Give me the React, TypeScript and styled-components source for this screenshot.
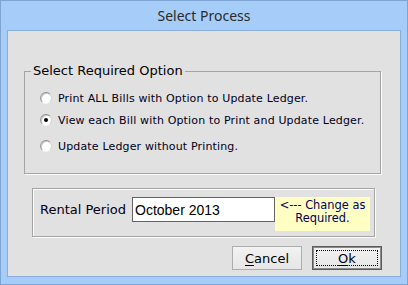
import React from 'react';
import styled, { createGlobalStyle } from 'styled-components';

const GlobalStyle = createGlobalStyle`
  html, body {
    margin: 0;
    padding: 0;
    background: #a5cdf7;
  }

  body {
    font-family: "DejaVu Sans", Verdana, sans-serif;
  }
`;

const Window = styled.div`
  display: flex;
  flex-direction: column;
  box-sizing: border-box;
  width: 408px;
  height: 285px;
  border: 1px solid #7ea4d4;
  background: #a5cdf7;
`;

const TitleBar = styled.div`
  display: flex;
  align-items: center;
  justify-content: center;
  height: 29px;
  color: #2b2b2b;
  font-family: "Noto Sans", "Open Sans", sans-serif;
  font-size: 14px;
`;

const Client = styled.div`
  display: flex;
  flex: 1;
  flex-direction: column;
  box-sizing: border-box;
  margin: 0 6px 7px;
  border: 1px solid #8aaedb;
  background: #e1e1e1;
`;

const OptionGroup = styled.fieldset`
  margin: 32px 19px 0 16px;
  padding: 8px 0 16px;
  border: 1px solid #a4a4a4;
  box-shadow: 1px 1px 0 #fbfbfb;
`;

const GroupTitle = styled.legend`
  margin-left: 6px;
  padding: 0 2px;
  color: #000;
  font-size: 13px;
  line-height: 16px;
`;

const OptionRow = styled.label<{ $spaced?: boolean }>`
  display: flex;
  align-items: center;
  height: 22px;
  margin-top: ${({ $spaced }) => ($spaced ? '4px' : '0')};
  padding-left: 15px;
  color: #000018;
  font-size: 11px;
  letter-spacing: 0.15px;
`;

const RadioMark = styled.span<{ $checked?: boolean }>`
  position: relative;
  box-sizing: border-box;
  width: 12px;
  height: 12px;
  margin-right: 6px;
  border: 1px solid;
  border-color: #8c8c8c #d4d4d4 #f4f4f4 #9a9a9a;
  border-radius: 50%;
  background: #fff;
  box-shadow: inset 1px 1px 0 #c8c8c8;

  &::after {
    content: '';
    display: ${({ $checked }) => ($checked ? 'block' : 'none')};
    position: absolute;
    top: 3px;
    left: 3px;
    width: 4px;
    height: 4px;
    border-radius: 50%;
    background: #000;
  }
`;

const PeriodBox = styled.div`
  display: flex;
  align-items: flex-start;
  margin: 14px 25px 0 24px;
  padding: 8px 0 5px 7px;
  border: 1px solid #a4a4a4;
  box-shadow: 1px 1px 0 #fbfbfb, inset 1px 1px 0 #fbfbfb;
`;

const FieldLabel = styled.span`
  width: 92px;
  line-height: 25px;
  color: #000018;
  font-size: 13px;
  white-space: nowrap;
`;

const PeriodInput = styled.input`
  box-sizing: border-box;
  width: 143px;
  height: 25px;
  padding: 0 2px;
  border: 1px solid #646464;
  background: #fff;
  color: #000;
  font-family: "Liberation Sans", Arial, sans-serif;
  font-size: 14px;
  outline: none;
`;

const Note = styled.div`
  box-sizing: border-box;
  width: 95px;
  height: 34px;
  padding-top: 2px;
  background: #ffffc4;
  color: #00005a;
  font-size: 11.4px;
  line-height: 13px;
  text-align: center;
  white-space: nowrap;
`;

const ButtonRow = styled.div`
  display: flex;
  justify-content: flex-end;
  gap: 10px;
  margin: 9px 18px 0 0;
`;

const Button = styled.button<{ $default?: boolean }>`
  position: relative;
  box-sizing: border-box;
  width: 70px;
  height: 24px;
  padding: 0;
  border: 1px solid ${({ $default }) => ($default ? '#5a5a5a' : '#adadad')};
  background: linear-gradient(#f2f2f2, #e6e6e6);
  box-shadow: ${({ $default }) => ($default ? 'inset 0 0 0 1px #8c8c8c' : 'none')};
  color: #000;
  font-family: "DejaVu Sans", Verdana, sans-serif;
  font-size: 13px;

  &::after {
    content: '';
    display: ${({ $default }) => ($default ? 'block' : 'none')};
    position: absolute;
    inset: 3px;
    border: 1px dotted #000;
  }

  u {
    text-decoration-thickness: 1px;
    text-underline-offset: 2px;
  }
`;

const options = [
  { text: 'Print ALL Bills with Option to Update Ledger.', checked: false, spaced: false },
  { text: 'View each Bill with Option to Print and Update Ledger.', checked: true, spaced: false },
  { text: 'Update Ledger without Printing.', checked: false, spaced: true },
];

const App: React.FC = () => {
  return (
    <>
      <GlobalStyle />
      <Window>
        <TitleBar>Select Process</TitleBar>
        <Client>
          <OptionGroup>
            <GroupTitle>Select Required Option</GroupTitle>
            {options.map((option) => (
              <OptionRow key={option.text} $spaced={option.spaced}>
                <RadioMark $checked={option.checked} />
                {option.text}
              </OptionRow>
            ))}
          </OptionGroup>

          <PeriodBox>
            <FieldLabel>Rental Period</FieldLabel>
            <PeriodInput defaultValue="October 2013" />
            <Note>
              &lt;--- Change as
              <br />
              Required.
            </Note>
          </PeriodBox>

          <ButtonRow>
            <Button>
              <u>C</u>ancel
            </Button>
            <Button $default>
              <u>O</u>k
            </Button>
          </ButtonRow>
        </Client>
      </Window>
    </>
  );
};

export default App;
